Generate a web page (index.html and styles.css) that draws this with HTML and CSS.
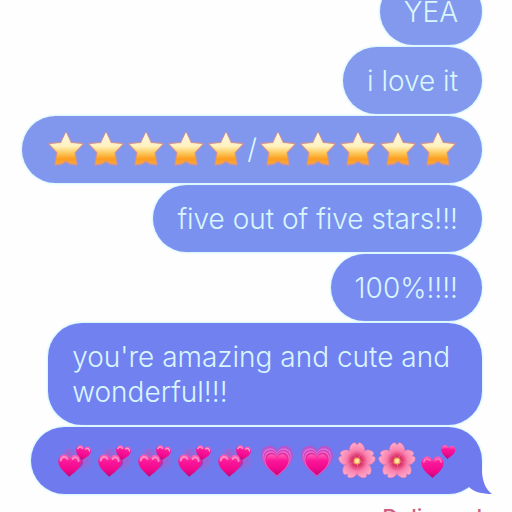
FILE: index.html
```
<!DOCTYPE html>
<html lang="en">
<head>
  <meta charset="utf-8">
  <title>Messages</title>
  <link rel="stylesheet" href="styles.css">
</head>
<body>
<!-- Emoji shapes, reused in the messages below -->
<svg class="defs" aria-hidden="true">
  <defs>
    <linearGradient id="starFill" x1="0" y1="0" x2="0" y2="1">
      <stop offset="0" stop-color="#fff8e6"/>
      <stop offset="0.42" stop-color="#fff2c0"/>
      <stop offset="0.65" stop-color="#fdc95c"/>
      <stop offset="0.85" stop-color="#fb9d20"/>
      <stop offset="1" stop-color="#fba83c"/>
    </linearGradient>
    <linearGradient id="heartFill" x1="0" y1="0" x2="0" y2="1">
      <stop offset="0" stop-color="#ff62b4"/>
      <stop offset="0.3" stop-color="#fb179a"/>
      <stop offset="0.7" stop-color="#f0088c"/>
      <stop offset="1" stop-color="#b90a78"/>
    </linearGradient>
    <radialGradient id="haze">
      <stop offset="0" stop-color="#d545b4" stop-opacity="0.65"/>
      <stop offset="1" stop-color="#b860d0" stop-opacity="0"/>
    </radialGradient>
    <radialGradient id="petalFill" gradientUnits="userSpaceOnUse" cx="20" cy="18" r="18">
      <stop offset="0" stop-color="#cf164f"/>
      <stop offset="0.32" stop-color="#dd3c71"/>
      <stop offset="0.58" stop-color="#fa7fad"/>
      <stop offset="1" stop-color="#ffabca"/>
    </radialGradient>
    <path id="heart" d="M0 12 C-4 8 -12 3 -12 -4 C-12 -9 -9 -11.5 -6 -11.5 C-3 -11.5 -1 -10 0 -7.5 C1 -10 3 -11.5 6 -11.5 C9 -11.5 12 -9 12 -4 C12 3 4 8 0 12 Z"/>
    <path id="petal" d="M20 18 C15 13 11 8 13 4 C14 1 17 -1 18.500 0 L20 2 L21.500 0 C23 -1 26 1 27 4 C29 8 25 13 20 18 Z"/>

    <symbol id="star" viewBox="0 0 40 35" overflow="visible">
      <path d="M20 1 L24.800 11 L36.600 12 L28.500 20.500 L30.500 32.500 L24 31.500 L20 29 L16 31.500 L9.500 32.500 L11.500 20.500 L3.400 12 L15.200 11 Z" fill="url(#starFill)" stroke="#e3917c" stroke-opacity="0.75" stroke-width="2.400" stroke-linejoin="round"/>
      <path d="M20 1.500 L24.600 11.500 L35.500 12.600 L28 20.400 L30 31.500 L24 30.500 L20 28 L16 30.500 L10 31.500 L12 20.400 L4.500 12.600 L15.400 11.500 Z" fill="url(#starFill)" stroke="url(#starFill)" stroke-width="1" stroke-linejoin="round"/>
    </symbol>

    <symbol id="hearts" viewBox="0 0 40 35" overflow="visible">
      <circle cx="27" cy="17" r="12" fill="url(#haze)"/>
      <circle cx="14" cy="11" r="8" fill="url(#haze)"/>
      <g transform="translate(28 10) rotate(12) scale(0.620)">
        <use href="#heart" fill="url(#heartFill)"/>
        <path d="M-9.500 -5 C-9 -9 -4.500 -10 -2.500 -7 M3 -7 C4.500 -10 9 -9 9.500 -5" fill="none" stroke="#ff9fd2" stroke-width="2" stroke-linecap="round"/>
      </g>
      <path d="M23 26 C28 23 29 20 27 16 L21 14 Z" fill="#9b1691" opacity="0.5"/>
      <g transform="translate(14.500 22.500) rotate(2) scale(0.940)">
        <use href="#heart" fill="url(#heartFill)"/>
        <path d="M-9.500 -5 C-9 -9.500 -4.500 -10 -2.500 -7 M3 -7 C4.500 -10 9 -9.500 9.500 -5" fill="none" stroke="#ff8bca" stroke-width="2" stroke-linecap="round"/>
      </g>
    </symbol>

    <symbol id="pair" viewBox="0 0 40 35" overflow="visible">
      <g transform="translate(30 9) rotate(6) scale(0.580)">
        <use href="#heart" fill="url(#heartFill)"/>
        <path d="M-9.500 -5 C-9 -9 -4.500 -10 -2.500 -7" fill="none" stroke="#ff7cc4" stroke-width="1.600"/>
      </g>
      <g transform="translate(14.500 24) scale(0.920)">
        <use href="#heart" fill="url(#heartFill)"/>
        <path d="M-9.500 -5 C-9 -9.500 -4.500 -10 -2.500 -7 M3 -7 C4.500 -10 9 -9.500 9.500 -5" fill="none" stroke="#ff7cc4" stroke-width="1.400" stroke-linecap="round"/>
      </g>
    </symbol>

    <symbol id="growing" viewBox="0 0 40 35" overflow="visible">
      <use href="#heart" transform="translate(21 18) scale(1.320)" fill="#b455cf"/>
      <use href="#heart" transform="translate(21 19) scale(1.200)" fill="#dd6bd3"/>
      <use href="#heart" transform="translate(21 20) scale(1.120)" fill="#c83dbb"/>
      <use href="#heart" transform="translate(21 20.500) scale(1.060)" fill="#f26ac8"/>
      <use href="#heart" transform="translate(21 21) scale(0.980)" fill="#de2aa4"/>
      <use href="#heart" transform="translate(21 21.500) scale(0.900)" fill="url(#heartFill)"/>
    </symbol>

    <symbol id="flower" viewBox="0 0 40 35" overflow="visible">
      <g fill="url(#petalFill)" stroke="#e873a6" stroke-width="0.500">
        <use href="#petal"/>
        <use href="#petal" transform="rotate(72 20 18)"/>
        <use href="#petal" transform="rotate(144 20 18)"/>
        <use href="#petal" transform="rotate(216 20 18)"/>
        <use href="#petal" transform="rotate(288 20 18)"/>
      </g>
      <circle cx="20" cy="18" r="3.500" fill="#f8a25c"/>
      <circle cx="20" cy="18" r="2.200" fill="#ffe8a0"/>
    </symbol>
  </defs>
</svg>

<main class="thread">
  <div class="bubble tone-1">YEA</div>
  <div class="bubble tone-1">i love it</div>
  <div class="bubble tone-2 emoji-bubble">
    <span class="emoji-group" role="img" aria-label="five stars">
      <svg class="emoji"><use href="#star"/></svg>
      <svg class="emoji"><use href="#star"/></svg>
      <svg class="emoji"><use href="#star"/></svg>
      <svg class="emoji"><use href="#star"/></svg>
      <svg class="emoji"><use href="#star"/></svg>
    </span>
    <span class="slash">/</span>
    <span class="emoji-group" role="img" aria-label="five stars">
      <svg class="emoji"><use href="#star"/></svg>
      <svg class="emoji"><use href="#star"/></svg>
      <svg class="emoji"><use href="#star"/></svg>
      <svg class="emoji"><use href="#star"/></svg>
      <svg class="emoji"><use href="#star"/></svg>
    </span>
  </div>
  <div class="bubble tone-3">five out of five stars!!!</div>
  <div class="bubble tone-4">100%!!!!</div>
  <div class="bubble tone-5">you're amazing and cute and wonderful!!!</div>
  <div class="bubble tone-6 emoji-bubble hearts-row">
    <span class="emoji-group" role="img" aria-label="two hearts">
      <svg class="emoji"><use href="#hearts"/></svg>
      <svg class="emoji"><use href="#hearts"/></svg>
      <svg class="emoji"><use href="#hearts"/></svg>
      <svg class="emoji"><use href="#hearts"/></svg>
      <svg class="emoji"><use href="#hearts"/></svg>
    </span>
    <span class="emoji-group" role="img" aria-label="growing hearts">
      <svg class="emoji"><use href="#growing"/></svg>
      <svg class="emoji"><use href="#growing"/></svg>
    </span>
    <span class="emoji-group" role="img" aria-label="cherry blossoms">
      <svg class="emoji"><use href="#flower"/></svg>
      <svg class="emoji"><use href="#flower"/></svg>
    </span>
    <span class="emoji-group" role="img" aria-label="two hearts">
      <svg class="emoji"><use href="#pair"/></svg>
    </span>
    <svg class="tail" viewBox="0 0 24 32" aria-hidden="true">
      <path d="M4 0 H14 V8 C14 19 18 28 24 32 C14 32 6 30 1 25 Z"/>
    </svg>
  </div>
  <p class="status">Delivered</p>
</main>
</body>
</html>
```

FILE: styles.css
```
body {
  margin: 0;
  height: 100vh;
  overflow: hidden;
  background-color: #fefefe;
  font-family: Inter, "Liberation Sans", sans-serif;
}

.defs {
  position: absolute;
  width: 0;
  height: 0;
}

/* Conversation, scrolled so the first bubble is partly out of view */
.thread {
  display: flex;
  flex-direction: column;
  align-items: flex-end;
  gap: 2px;
  margin-top: -22px;
  padding-right: 30px;
}

.bubble {
  box-sizing: border-box;
  max-width: 90%;
  padding: 17px 24px 15px;
  border-radius: 34px;
  color: #d9f6ff;
  font-size: 28px;
  font-weight: 350;
  line-height: 35px;
  box-shadow: 0 0 2px 1px #d3f5ff;
}

/* Bubbles get deeper in colour towards the bottom */
.tone-1 { background-color: #8299ed; }
.tone-2 { background-color: #8197ed; }
.tone-3 { background-color: #7b91ef; }
.tone-4 { background-color: #788bf0; }
.tone-5 { background-color: #7281f0; }
.tone-6 { background-color: #6f7aee; }

.emoji-bubble {
  display: flex;
  position: relative;
  max-width: none;
  padding: 16px 24px;
}

.hearts-row {
  gap: 1px;
}

.emoji-group {
  display: flex;
}

.emoji {
  display: block;
  width: 40px;
  height: 35px;
  overflow: visible;
}

.slash {
  width: 12px;
  text-align: center;
}

.tail {
  position: absolute;
  right: -10px;
  bottom: 0;
  width: 24px;
  height: 32px;
  fill: #6f7aee;
}

.status {
  margin: 8px 0 0;
  color: #cf5f80;
  font-size: 22px;
  font-weight: 500;
  line-height: 26px;
}
```
